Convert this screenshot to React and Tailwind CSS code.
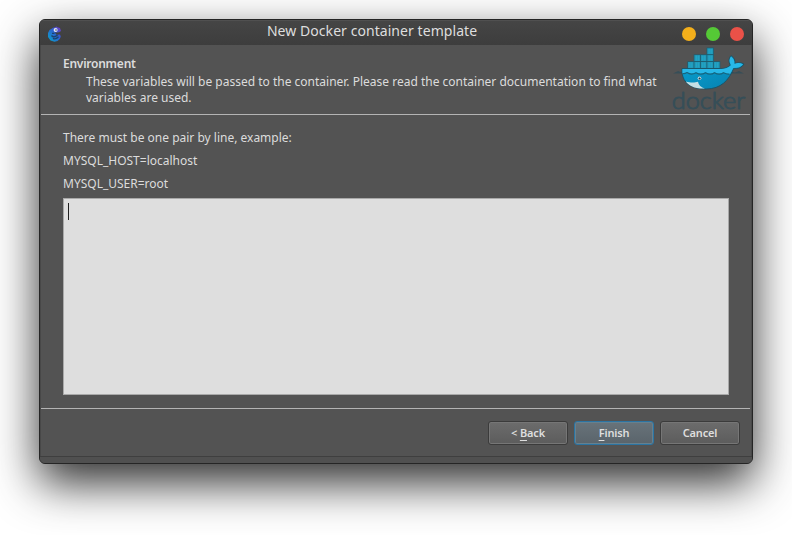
import React from "react";

function AppIcon() {
  return (
    <svg className="block h-4 w-4" viewBox="0 0 16 16">
      <defs>
        <linearGradient id="chameleon" x1="1" y1="0" x2="0" y2="1">
          <stop offset="0" stopColor="#7a35c4" />
          <stop offset="0.45" stopColor="#2b62d0" />
          <stop offset="1" stopColor="#06a9c8" />
        </linearGradient>
      </defs>
      <path
        d="M5 2.6 C6 1.6 7 1.5 7.5 1.6 L9.5 0.4 L10.5 1.2 L13 2 L14 5 L12 6.2 L10 6.4 L7.6 6.2 L9.5 8.8 L13 8.5 L13.8 10.5 L12.8 13 L10.5 15 L7.5 15.8 L3.5 14.5 L1 11 L1 7 L2.5 4 Z"
        fill="url(#chameleon)"
      />
      <path d="M4.5 9.5 C6 11.5 8.5 11 10.6 9 M6 12.4 C8 13.4 10 12.5 11.5 10.8 M5 7.4 L7.5 7.4" fill="none" stroke="#1b4470" strokeWidth="1.3" />
      <circle cx="8.6" cy="4.1" r="2" fill="#e4e8f5" />
      <circle cx="9" cy="4" r="0.7" fill="#20254a" />
    </svg>
  );
}

const CONTAINERS = [
  [36, 1],
  [23.1, 7.8],
  [29.6, 7.8],
  [36, 7.8],
  [16.7, 14.7],
  [23.1, 14.7],
  [29.6, 14.7],
  [36, 14.7],
  [42.5, 14.7],
];

function DockerLogo() {
  return (
    <svg className="block h-[66px] w-[76px]" viewBox="0 0 76 66">
      <defs>
        <linearGradient id="hull" x1="0" y1="0" x2="1" y2="1">
          <stop offset="0" stopColor="#06a2d2" />
          <stop offset="1" stopColor="#087fae" />
        </linearGradient>
      </defs>
      <path d="M2 26.5 L7 24 L11 25.6 V26.5 Z" fill="#364e58" />
      <path d="M58 26.5 L61 25 L64 25.6 L68 24 L73 26.5 Z" fill="#364e58" />
      {CONTAINERS.map(([x, y]) => (
        <g key={`${x}-${y}`} transform={`translate(${x} ${y})`}>
          <rect x="-0.4" y="-0.4" width="7.2" height="7.4" fill="#1b5f73" />
          <rect x="0.3" y="0.3" width="5.8" height="6" fill="#2098b8" />
          <path d="M2.2 0.8 V5.8 M4.2 0.8 V5.8" stroke="#27b0d2" strokeWidth="0.6" />
        </g>
      ))}
      <path
        d="M11 21.6 H50 C54 21.6 57.5 20 59.3 18.2 C57.5 15 57.5 11.5 60 8.7 C63 10.5 64.3 13 64 16.5 C67 15.3 70.5 15.5 73 17 C71 20.5 67 22 62.5 21.7 C58 33 50 42 35 42 C22 42 14.5 37.5 12 30 C11 27 10.8 24 11 21.6 Z"
        fill="url(#hull)"
        stroke="#1c5062"
        strokeWidth="0.9"
      />
      <path
        d="M11.5 22 H50 C54 22 57.8 20.5 60 18.2 C58 15 58 12 60 9.5 C62.5 11.5 63.7 13.5 63.3 17 C66 15.8 69 15.8 72 17.2 C70 20 67 21 62.2 21 C61 23.5 60.4 25 59 27 C56 27.2 54 26.3 52.5 25.5 C50 27 46 27 43.5 25.5 C40.5 27 37 27 34.5 25.5 C31 27 28 27 25 25.5 C22 27 18.5 27 16 25.4 C14.5 26.3 13 26.5 11.5 26.4 Z"
        fill="#28b8e8"
      />
      <path
        d="M11.5 26.6 C13.5 27 15 26.2 16 25.6 C19 27.5 22 27.5 25 25.7 C28 27.5 31.5 27.5 34.5 25.7 C37.5 27.5 41 27.5 43.5 25.7 C46.5 27.5 50 27.5 52.5 25.7 C54.5 26.7 56.5 27.2 58.5 27"
        fill="none"
        stroke="#17657e"
        strokeWidth="1.2"
      />
      <path d="M14.8 34.5 C20 36.2 24.5 35.6 27 34.8 C27.5 38.2 30 40.7 34 41.5 C24 42 18 39 14.8 34.5 Z" fill="#c5dfe4" />
      <circle cx="28.5" cy="31.3" r="1.8" fill="#d1e4e8" />
      <circle cx="28.6" cy="31.5" r="1.1" fill="#26404b" />
      <text
        x="0.7"
        y="61.5"
        textLength="73.5"
        lengthAdjust="spacingAndGlyphs"
        fill="#364e58"
        stroke="#364e58"
        strokeWidth="0.9"
        strokeLinejoin="round"
        className="font-['Lato',sans-serif] text-[22.5px] font-light"
      >
        docker
      </text>
    </svg>
  );
}

function TitleBar() {
  return (
    <div className="flex h-[25px] shrink-0 items-center justify-between border-t border-[#505050] bg-linear-to-b from-[#454545] to-[#3d3d3d] pr-2 pl-[7px]">
      <div className="flex w-[69px] pt-[2px]">
        <AppIcon />
      </div>
      <h1 className="-mt-[4px] mr-[54px] text-[14px] leading-5 tracking-[0.06px] whitespace-nowrap text-[#dedede]">New Docker container template</h1>
      <div className="flex gap-[10px] pt-[1px]">
        <span className="h-[14px] w-[14px] rounded-full bg-[#f3af1b]" />
        <span className="h-[14px] w-[14px] rounded-full bg-[#55c936]" />
        <span className="h-[14px] w-[14px] rounded-full bg-[#ea5148]" />
      </div>
    </div>
  );
}

function Button({ primary, children }) {
  return (
    <button
      className={
        "h-6 w-20 rounded-[3px] border text-[11px] leading-[20px] font-semibold tracking-[-0.15px] text-[#dedede] " +
        (primary
          ? "border-[#2a74a3] bg-linear-to-b from-[#68737a] to-[#5a646b] shadow-[inset_0_0_0_1px_#65808f]"
          : "border-[#3b3b3b] bg-linear-to-b from-[#6c6c6c] to-[#5c5c5c] shadow-[inset_0_0_0_1px_#767676]")
      }
    >
      {children}
    </button>
  );
}

function Mnemonic({ children }) {
  return <span className="underline decoration-1 underline-offset-[3px]">{children}</span>;
}

export default function App() {
  return (
    <div className="h-[535px] w-[792px] overflow-hidden bg-white pt-[19px] pl-[39px] font-['Noto_Sans',sans-serif] text-[12px] text-[#dcdcdc]">
      <div className="flex h-[445px] w-[714px] flex-col overflow-hidden rounded-[6px] border border-[#252525] bg-[#535353] shadow-[0_19px_46px_rgba(0,0,0,0.82)]">
        <TitleBar />
        <div className="flex min-h-0 flex-1 flex-col border-x border-[#484848]">
          <header className="mr-px flex h-[70px] shrink-0 justify-between border-b border-[#b4b4b4] pl-[22px]">
            <div className="pt-[11px] leading-4">
              <h2 className="font-semibold tracking-[-0.25px]">Environment</h2>
              <p className="pt-[2px] pl-[23px] whitespace-nowrap">
                These variables will be passed to the container. Please read the container documentation to find what
                <br />
                variables are used.
              </p>
            </div>
            <div className="mr-[3px] pt-[2px]">
              <DockerLogo />
            </div>
          </header>
          <main className="mr-px flex h-[294px] shrink-0 flex-col border-b border-[#b4b4b4] px-[22px] pt-[11px]">
            <p className="h-[23px] leading-[23px]">There must be one pair by line, example:</p>
            <p className="h-[23px] leading-[23px]">MYSQL_HOST=localhost</p>
            <p className="h-[23px] leading-[23px]">MYSQL_USER=root</p>
            <div className="mt-[3px] h-[197px] w-[666px] border border-[#a9a9a9] bg-[#dedede] pt-[4px] pl-[4px]">
              <div className="h-[17px] w-px bg-[#202020]" />
            </div>
          </main>
          <footer className="flex h-[47px] shrink-0 justify-end gap-[6px] pt-3 pr-[11px]">
            <Button>
              &lt; <Mnemonic>B</Mnemonic>ack
            </Button>
            <Button primary>
              <Mnemonic>F</Mnemonic>inish
            </Button>
            <Button>Cancel</Button>
          </footer>
        </div>
        <div className="h-[7px] shrink-0 border-t border-[#3f3f3f] bg-[#505050]" />
      </div>
    </div>
  );
}
